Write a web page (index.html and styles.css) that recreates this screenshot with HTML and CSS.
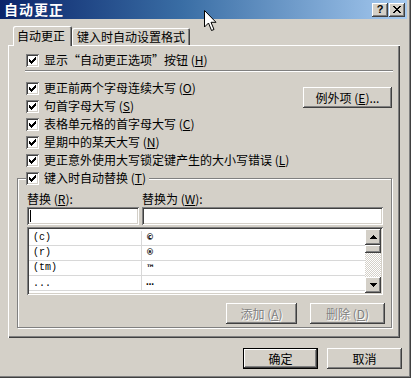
FILE: index.html
```html
<!DOCTYPE html>
<html lang="zh-CN">
<head>
<meta charset="utf-8">
<title>自动更正</title>
<link rel="stylesheet" href="styles.css">
</head>
<body>
<div class="dialog">
  <div class="titlebar">
    <span class="title">自动更正</span>
    <div class="tb-buttons">
      <div class="tb-btn help">?</div>
      <div class="tb-btn close">
        <svg width="8" height="7" viewBox="0 0 8 7"><path d="M0 0h2v1H0zM6 0h2v1H6zM1 1h2v1H1zM5 1h2v1H5zM2 2h4v1H2zM3 3h2v1H3zM2 4h4v1H2zM1 5h2v1H1zM5 5h2v1H5zM0 6h2v1H0zM6 6h2v1H6z" fill="#000"/></svg>
      </div>
    </div>
  </div>

  <div class="tabs">
    <div class="tab active">自动更正</div>
    <div class="tab">键入时自动设置格式</div>
  </div>

  <div class="panel">
    <div class="check-row">
      <span class="cb"><svg width="7" height="7" viewBox="0 0 7 7"><path d="M0 2h1v3H0zM1 3h1v3H1zM2 4h1v3H2zM3 3h1v3H3zM4 2h1v3H4zM5 1h1v3H5zM6 0h1v3H6z" fill="#000"/></svg></span>
      <span class="label">显示“自动更正选项”按钮 (<u>H</u>)</span>
    </div>
    <div class="sep"></div>
    <div class="opts">
      <div class="opt-list">
        <div class="check-row"><span class="cb"><svg width="7" height="7" viewBox="0 0 7 7"><path d="M0 2h1v3H0zM1 3h1v3H1zM2 4h1v3H2zM3 3h1v3H3zM4 2h1v3H4zM5 1h1v3H5zM6 0h1v3H6z" fill="#000"/></svg></span><span class="label">更正前两个字母连续大写 (<u>O</u>)</span></div>
        <div class="check-row"><span class="cb"><svg width="7" height="7" viewBox="0 0 7 7"><path d="M0 2h1v3H0zM1 3h1v3H1zM2 4h1v3H2zM3 3h1v3H3zM4 2h1v3H4zM5 1h1v3H5zM6 0h1v3H6z" fill="#000"/></svg></span><span class="label">句首字母大写 (<u>S</u>)</span></div>
        <div class="check-row"><span class="cb"><svg width="7" height="7" viewBox="0 0 7 7"><path d="M0 2h1v3H0zM1 3h1v3H1zM2 4h1v3H2zM3 3h1v3H3zM4 2h1v3H4zM5 1h1v3H5zM6 0h1v3H6z" fill="#000"/></svg></span><span class="label">表格单元格的首字母大写 (<u>C</u>)</span></div>
        <div class="check-row"><span class="cb"><svg width="7" height="7" viewBox="0 0 7 7"><path d="M0 2h1v3H0zM1 3h1v3H1zM2 4h1v3H2zM3 3h1v3H3zM4 2h1v3H4zM5 1h1v3H5zM6 0h1v3H6z" fill="#000"/></svg></span><span class="label">星期中的某天大写 (<u>N</u>)</span></div>
        <div class="check-row"><span class="cb"><svg width="7" height="7" viewBox="0 0 7 7"><path d="M0 2h1v3H0zM1 3h1v3H1zM2 4h1v3H2zM3 3h1v3H3zM4 2h1v3H4zM5 1h1v3H5zM6 0h1v3H6z" fill="#000"/></svg></span><span class="label">更正意外使用大写锁定键产生的大小写错误 (<u>L</u>)</span></div>
      </div>
      <div class="btn exceptions">例外项 (<u>E</u>)...</div>
    </div>

    <div class="group">
      <div class="legend">
        <span class="cb"><svg width="7" height="7" viewBox="0 0 7 7"><path d="M0 2h1v3H0zM1 3h1v3H1zM2 4h1v3H2zM3 3h1v3H3zM4 2h1v3H4zM5 1h1v3H5zM6 0h1v3H6z" fill="#000"/></svg></span>
        <span class="label">键入时自动替换 (<u>T</u>)</span>
      </div>
      <div class="labels">
        <span class="lab1">替换 (<u>R</u>):</span>
        <span class="lab2">替换为 (<u>W</u>):</span>
      </div>
      <div class="inputs">
        <div class="input i1"><span class="caret"></span></div>
        <div class="input i2"></div>
      </div>
      <div class="list">
        <div class="rows">
          <div class="row"><span class="c1">(c)</span><span class="c2">©</span></div>
          <div class="row"><span class="c1">(r)</span><span class="c2">®</span></div>
          <div class="row"><span class="c1">(tm)</span><span class="c2 tm">™</span></div>
          <div class="row"><span class="c1 dots">...</span><span class="c2">…</span></div>
        </div>
        <div class="scrollbar">
          <div class="sb-btn"><svg width="7" height="4" viewBox="0 0 7 4"><path d="M3 0h1v1H3zM2 1h3v1H2zM1 2h5v1H1zM0 3h7v1H0z" fill="#000"/></svg></div>
          <div class="sb-thumb"></div>
          <div class="sb-track"></div>
          <div class="sb-btn"><svg width="7" height="4" viewBox="0 0 7 4"><path d="M0 0h7v1H0zM1 1h5v1H1zM2 2h3v1H2zM3 3h1v1H3z" fill="#000"/></svg></div>
        </div>
      </div>
      <div class="group-btns">
        <div class="btn disabled add">添加 (<u>A</u>)</div>
        <div class="btn disabled del">删除 (<u>D</u>)</div>
      </div>
    </div>
  </div>

  <div class="footer">
    <div class="btn default">确定</div>
    <div class="btn">取消</div>
  </div>

  <svg class="cursor" width="13" height="22" viewBox="0 0 13 22">
    <path d="M0.5 0.5 L0.5 17 L4.5 13 L7.5 20.5 L10 19.5 L7 12.3 L12 12.3 Z" fill="#fff" stroke="#000" stroke-width="1" stroke-linejoin="miter"/>
  </svg>
</div>
</body>
</html>
```

FILE: styles.css
```css
* { box-sizing: border-box; }

html, body {
  margin: 0;
  padding: 0;
  background: #d4d0c8;
}

.dialog {
  position: relative;
  width: 411px;
  height: 378px;
  overflow: hidden;
  background: #d4d0c8;
  box-shadow: inset -1px -1px #404040, inset -2px -2px #808080;
  font-family: "Noto Sans CJK SC", "Noto Sans", sans-serif;
  font-size: 12px;
  color: #000;
}

u { text-decoration: underline; text-underline-offset: 1px; }

/* Title bar */
.titlebar {
  height: 19px;
  margin-right: 4px;
  background: linear-gradient(90deg, #0a246a 0%, #3a6ea5 45%, #a6caf0 100%);
  display: flex;
  align-items: center;
  justify-content: space-between;
  padding: 0 2px 0 4px;
}
.title {
  color: #fff;
  font-weight: bold;
  font-size: 14px;
  line-height: 19px;
  letter-spacing: 1px;
}
.tb-buttons { display: flex; gap: 1px; }
.tb-btn {
  width: 16px;
  height: 14px;
  background: #d4d0c8;
  box-shadow: inset -1px -1px #404040, inset 1px 1px #fff, inset -2px -2px #808080;
  display: flex;
  align-items: center;
  justify-content: center;
}
.tb-btn.help {
  font-family: "Liberation Sans", Arial, sans-serif;
  font-weight: bold;
  font-size: 11px;
  line-height: 14px;
  padding-bottom: 1px;
}
.tb-btn.close { padding-right: 1px; padding-bottom: 1px; }

/* Tabs */
.tabs {
  margin-top: 7px;
  height: 19px;
  display: flex;
  align-items: flex-end;
  padding-left: 13px;
  position: relative;
  z-index: 1;
}
.tab {
  height: 17px;
  line-height: 17px;
  padding-left: 5px;
  width: 118px;
  background: #d4d0c8;
  box-shadow: inset 1px 1px #fff, inset -1px 0 #404040, inset -2px 0 #808080;
  border-top-left-radius: 2px;
  border-top-right-radius: 2px;
  white-space: nowrap;
}
.tab.active {
  width: 59px;
  height: 20px;
  line-height: 19px;
  margin-bottom: -1px;
  padding-left: 4px;
}

/* Panel */
.panel {
  margin-left: 8px;
  width: 392px;
  height: 293px;
  padding: 6px 0 0 18px;
  box-shadow: inset 1px 1px #fff, inset -1px -1px #404040, inset -2px -2px #808080;
}

.check-row {
  height: 18px;
  display: flex;
  align-items: center;
  white-space: nowrap;
}
.cb {
  width: 13px;
  height: 13px;
  flex: none;
  background: #fff;
  box-shadow: inset 1px 1px #808080, inset -1px -1px #fff, inset 2px 2px #404040, inset -2px -2px #d4d0c8;
  display: flex;
  align-items: center;
  justify-content: center;
  margin-right: 5px;
}
.cb svg { display: block; }
.label { line-height: 18px; }

.sep {
  margin: 1px 0 0 -1px;
  width: 368px;
  height: 2px;
  border-top: 1px solid #808080;
  border-bottom: 1px solid #fff;
}

.opts {
  margin-top: 7px;
  display: flex;
}
.opt-list { flex: 1; }

.btn {
  height: 21px;
  background: #d4d0c8;
  box-shadow: inset -1px -1px #404040, inset 1px 1px #fff, inset -2px -2px #808080;
  display: flex;
  align-items: center;
  justify-content: center;
  white-space: nowrap;
  line-height: 1;
}
.btn.exceptions {
  margin-top: 8px;
  margin-right: 8px;
  width: 89px;
  flex: none;
}
.btn.disabled {
  color: #808080;
  text-shadow: 1px 1px #fff;
}
.btn.default {
  border: 1px solid #000;
}

/* Group box */
.group {
  margin: 9px 0 0 -9px;
  width: 375px;
  height: 150px;
  border: 1px solid #808080;
  box-shadow: inset 1px 1px #fff, 1px 1px #fff;
  padding-left: 9px;
}
.legend {
  margin-top: -10px;
  margin-left: -1px;
  height: 18px;
  width: fit-content;
  display: flex;
  align-items: center;
  background: #d4d0c8;
  padding-right: 3px;
  white-space: nowrap;
}
.labels {
  margin-top: 5px;
  height: 14px;
  line-height: 14px;
  display: flex;
}
.lab1 { width: 115px; }

.inputs {
  margin-top: 1px;
  display: flex;
}
.input {
  height: 18px;
  background: #fff;
  box-shadow: inset 1px 1px #808080, inset -1px -1px #fff, inset 2px 2px #404040, inset -2px -2px #d4d0c8;
}
.i1 { width: 112px; padding: 3px 0 0 3px; }
.i2 { width: 241px; margin-left: 3px; }
.caret {
  display: block;
  width: 1px;
  height: 12px;
  background: #000;
}

.list {
  margin-top: 2px;
  width: 356px;
  height: 68px;
  background: #fff;
  box-shadow: inset 1px 1px #808080, inset -1px -1px #fff, inset 2px 2px #404040, inset -2px -2px #d4d0c8;
  padding: 2px;
  display: flex;
}
.rows {
  flex: 1;
  padding-top: 2px;
  overflow: hidden;
}
.row {
  height: 15px;
  border-bottom: 1px solid #d8d8d8;
  display: flex;
  align-items: center;
}
.c1 {
  width: 113px;
  height: 100%;
  border-right: 1px solid #d8d8d8;
  padding-left: 4px;
  font-family: "Liberation Mono", "Courier New", monospace;
  font-size: 10px;
  line-height: 14px;
}
.c1.dots { line-height: 16px; }
.c2 {
  padding-left: 4px;
  font-family: "DejaVu Sans", sans-serif;
  font-weight: bold;
  font-size: 8px;
  line-height: 14px;
}
.c2.tm { font-size: 9px; }

.scrollbar {
  width: 16px;
  display: flex;
  flex-direction: column;
}
.sb-btn {
  height: 16px;
  background: #d4d0c8;
  box-shadow: inset -1px -1px #404040, inset 1px 1px #fff, inset -2px -2px #808080;
  display: flex;
  align-items: center;
  justify-content: center;
  flex: none;
}
.sb-thumb {
  height: 8px;
  flex: none;
  background: #d4d0c8;
  box-shadow: inset -1px -1px #404040, inset 1px 1px #fff, inset -2px -2px #808080;
}
.sb-track {
  flex: 1;
  background: repeating-conic-gradient(#d4d0c8 0 25%, #fff 0 50%) 0 0 / 2px 2px;
}

.group-btns {
  margin-top: 8px;
  display: flex;
  justify-content: flex-end;
  gap: 13px;
  padding-right: 6px;
}
.btn.add { width: 71px; }
.btn.del { width: 75px; }

/* Footer */
.footer {
  margin-top: 10px;
  display: flex;
  justify-content: flex-end;
  gap: 9px;
  padding-right: 9px;
}
.footer .btn { width: 75px; }

.cursor {
  position: absolute;
  left: 204px;
  top: 10px;
}
```
